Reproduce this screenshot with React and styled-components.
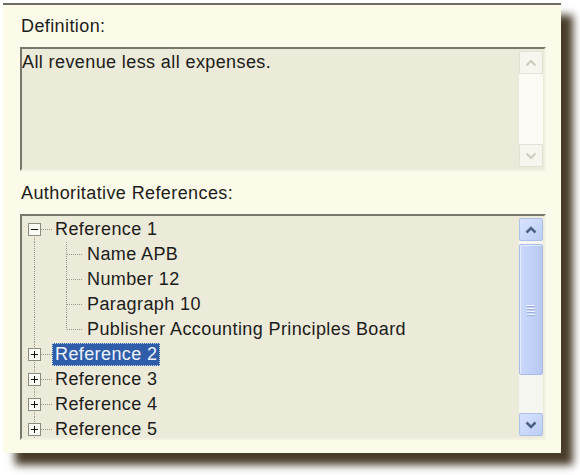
import styled, { createGlobalStyle, css } from 'styled-components';

const GlobalStyle = createGlobalStyle`
  html, body {
    margin: 0;
    min-height: 100vh;
    background: #ffffff;
  }
`;

const TREE = [
  { label: 'Reference 1', level: 0, expanded: true, first: true },
  { label: 'Name APB', level: 1 },
  { label: 'Number 12', level: 1 },
  { label: 'Paragraph 10', level: 1 },
  { label: 'Publisher Accounting Principles Board', level: 1, lastChild: true },
  { label: 'Reference 2', level: 0, selected: true },
  { label: 'Reference 3', level: 0 },
  { label: 'Reference 4', level: 0 },
  { label: 'Reference 5', level: 0 },
];

export default function App() {
  return (
    <>
      <GlobalStyle />
      <Page>
        <Panel>
          <FieldLabel>Definition:</FieldLabel>
          <InsetBox $height={124}>
            <TextArea>All revenue less all expenses.</TextArea>
            <ScrollBar disabled />
          </InsetBox>
          <FieldLabel $gap={12}>Authoritative References:</FieldLabel>
          <InsetBox $height={226}>
            <TreeList>
              {TREE.map((node) => (
                <TreeRow key={node.label}>
                  <Connector node={node} />
                  <NodeLabel $selected={node.selected}>{node.label}</NodeLabel>
                </TreeRow>
              ))}
            </TreeList>
            <ScrollBar thumbOffset={3} thumbHeight={131} />
          </InsetBox>
        </Panel>
      </Page>
    </>
  );
}

// tree connector lines + expander box
function Connector({ node }) {
  const h = 25;
  const mid = 12.5;
  const dot = '1 1';
  if (node.level === 1) {
    return (
      <ConnectorSvg width={62} height={h}>
        <line x1="12.5" y1="0" x2="12.5" y2={h} stroke="#9a9a8c" strokeDasharray={dot} />
        <line x1="44.5" y1="0" x2="44.5" y2={node.lastChild ? mid : h} stroke="#9a9a8c" strokeDasharray={dot} />
        <line x1="45" y1={mid} x2="61" y2={mid} stroke="#9a9a8c" strokeDasharray={dot} />
      </ConnectorSvg>
    );
  }
  return (
    <ConnectorSvg width={30} height={h}>
      <line x1="12.5" y1={node.first ? 18 : 0} x2="12.5" y2={h} stroke="#9a9a8c" strokeDasharray={dot} />
      <line x1="19" y1={mid} x2="30" y2={mid} stroke="#9a9a8c" strokeDasharray={dot} />
      <rect x="6.5" y="6.5" width="12" height="12" fill="#fbfbf6" stroke="#8c8c80" />
      <line x1="9" y1="12.5" x2="16" y2="12.5" stroke="#111" />
      {!node.expanded && <line x1="12.5" y1="9" x2="12.5" y2="16" stroke="#111" />}
    </ConnectorSvg>
  );
}

function Arrow({ up, disabled }) {
  return (
    <svg width="12" height="8" viewBox="0 0 12 8">
      <polyline
        points={up ? '1.5,6.5 6,2 10.5,6.5' : '1.5,1.5 6,6 10.5,1.5'}
        fill="none"
        stroke={disabled ? '#cdcbbd' : '#4d6185'}
        strokeWidth={disabled ? 2 : 2.6}
      />
    </svg>
  );
}

function ScrollBar({ disabled = false, thumbOffset = 0, thumbHeight = 0 }) {
  return (
    <Bar>
      <ArrowButton $disabled={disabled}>
        <Arrow up disabled={disabled} />
      </ArrowButton>
      <Track $disabled={disabled}>
        {!disabled && (
          <Thumb style={{ marginTop: thumbOffset, height: thumbHeight }}>
            <Grip />
            <Grip />
            <Grip />
            <Grip />
          </Thumb>
        )}
      </Track>
      <ArrowButton $disabled={disabled}>
        <Arrow disabled={disabled} />
      </ArrowButton>
    </Bar>
  );
}

const FONT = css`
  font-family: 'Liberation Sans', Arial, sans-serif;
  font-size: 18px;
  letter-spacing: 0.4px;
  color: #1c1c1a;
`;

const Page = styled.div`
  width: 580px;
  height: 475px;
  padding: 3px;
  box-sizing: border-box;
`;

const Panel = styled.div`
  width: 558px;
  height: 450px;
  box-sizing: border-box;
  padding: 11px 15px 0 17px;
  background: #fcfbe9;
  border-top: 2px solid #6c6c66;
  box-shadow: 12px 12px 8px rgba(62, 50, 30, 0.95);
  display: flex;
  flex-direction: column;
`;

const FieldLabel = styled.div`
  ${FONT};
  line-height: 20px;
  padding-left: 1px;
  margin-top: ${({ $gap }) => $gap || 0}px;
  margin-bottom: 11px;
`;

const InsetBox = styled.div`
  height: ${({ $height }) => $height}px;
  box-sizing: border-box;
  border-style: solid;
  border-width: 2px;
  border-color: #77776b #f2f1e2 #f2f1e2 #77776b;
  background: #ecead9;
  display: flex;
  padding: 0 1px 0 0;
`;

const TextArea = styled.div`
  ${FONT};
  flex: 1;
  line-height: 20px;
  padding: 3px 0 0 0;
`;

const TreeList = styled.div`
  flex: 1;
  display: flex;
  flex-direction: column;
  overflow: hidden;
  padding-top: 1px;
`;

const TreeRow = styled.div`
  display: flex;
  align-items: center;
  height: 25px;
  flex-shrink: 0;
`;

const ConnectorSvg = styled.svg`
  display: block;
  flex-shrink: 0;
`;

const NodeLabel = styled.span`
  ${FONT};
  line-height: 21px;
  padding: 0 2px 0 2px;
  border: 1px dotted transparent;
  ${({ $selected }) =>
    $selected &&
    css`
      background: #2f5daa;
      color: #eef3ff;
      border-color: #c9d6f0;
    `}
`;

const Bar = styled.div`
  width: 24px;
  flex-shrink: 0;
  display: flex;
  flex-direction: column;
  padding: 2px 0 2px;
`;

const ArrowButton = styled.div`
  height: 23px;
  box-sizing: border-box;
  display: flex;
  align-items: center;
  justify-content: center;
  border-radius: 2px;
  ${({ $disabled }) =>
    $disabled
      ? css`
          background: #f7f6ee;
          border: 1px solid #e4e2d6;
        `
      : css`
          background: linear-gradient(135deg, #d7e2fd, #bccdf6);
          border: 1px solid #aebfe9;
        `}
`;

const Track = styled.div`
  flex: 1;
  display: flex;
  flex-direction: column;
  background: ${({ $disabled }) => ($disabled ? '#fbfaf5' : '#f6f6f1')};
`;

const Thumb = styled.div`
  box-sizing: border-box;
  border: 1px solid #a9bbe6;
  border-radius: 2px;
  background: linear-gradient(90deg, #cbd8fa, #bfcff6 60%, #b6c7f2);
  box-shadow: inset 1px 1px 0 #e4ebfd;
  display: flex;
  flex-direction: column;
  align-items: center;
  justify-content: center;
  gap: 2px;
`;

const Grip = styled.div`
  width: 8px;
  height: 1px;
  background: #eef2fd;
  box-shadow: 0 1px 0 #9fb2de;
`;
